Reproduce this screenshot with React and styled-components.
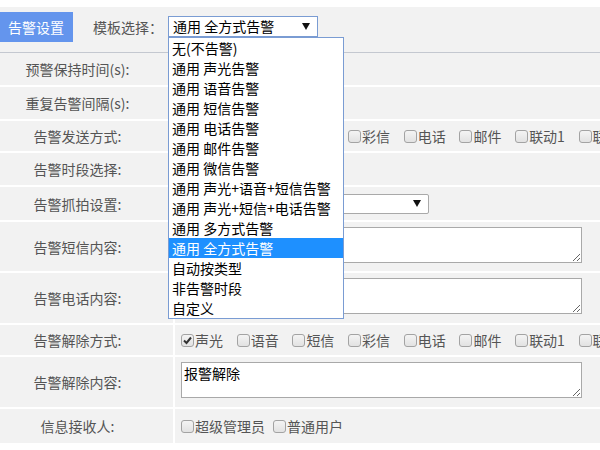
import styled, { createGlobalStyle } from "styled-components";

const GlobalStyle = createGlobalStyle`
  body {
    margin: 0;
    background: #fff;
    font-family: "Noto Sans CJK SC", "Liberation Sans", sans-serif;
    font-size: 14px;
    color: #555;
  }
`;

const Page = styled.div`
  width: 600px;
  padding-top: 7px;
  overflow: hidden;
`;

const Header = styled.div`
  display: flex;
  align-items: flex-start;
  height: 40px;
  padding-top: 5px;
  background: #f2f2f2;
  border-bottom: 1px solid #c4c8d0;
  position: relative;
  z-index: 2;
`;

const TabButton = styled.div`
  height: 30px;
  line-height: 30px;
  padding: 0 9px 0 8px;
  background: #6495ed;
  color: #fff;
  font-size: 14px;
`;

const HeaderLabel = styled.span`
  margin-left: 20px;
  line-height: 30px;
  color: #555;
`;

const SelectWrap = styled.div`
  position: relative;
  margin-left: 5px;
  margin-top: 4px;
`;

const SelectBox = styled.div`
  display: flex;
  align-items: center;
  justify-content: space-between;
  box-sizing: border-box;
  width: ${(p) => p.$width}px;
  height: ${(p) => p.$height || 21}px;
  padding: 0 7px 0 4px;
  background: #fff;
  border: 1px solid ${(p) => (p.$focus ? "#7a9cd3" : "#a9a9a9")};
  border-radius: ${(p) => (p.$focus ? 0 : 2)}px;
  color: #000;
  font-size: 14px;
  line-height: 19px;
`;

const Arrow = styled.span`
  width: 0;
  height: 0;
  border-left: 4px solid transparent;
  border-right: 4px solid transparent;
  border-top: 7px solid #111;
`;

const OptionList = styled.ul`
  position: absolute;
  top: 21px;
  left: 0;
  width: 176px;
  box-sizing: border-box;
  margin: 0;
  padding: 0;
  list-style: none;
  background: #fff;
  border: 1px solid #7a9cd3;
`;

const Option = styled.li`
  height: 20px;
  line-height: 20px;
  padding-left: 3px;
  color: ${(p) => (p.$active ? "#fff" : "#000")};
  background: ${(p) => (p.$active ? "#1e90ff" : "transparent")};
  white-space: nowrap;
`;

const Table = styled.div`
  display: flex;
  flex-direction: column;
`;

const Row = styled.div`
  display: grid;
  grid-template-columns: 173px 1fr;
  column-gap: 2px;
  height: ${(p) => p.$h}px;
  border-bottom: 2px solid #fff;
  background: #fff;
`;

const Label = styled.div`
  display: flex;
  align-items: center;
  justify-content: center;
  padding-right: 18px;
  background: #f2f2f2;
  color: #555;
  white-space: nowrap;
`;

const Value = styled.div`
  display: flex;
  align-items: ${(p) => (p.$top ? "flex-start" : "center")};
  padding: ${(p) => (p.$top ? "5px 0 0 6px" : "0 0 0 6px")};
  background: #f2f2f2;
  white-space: nowrap;
  overflow: hidden;
`;

const TextInput = styled.div`
  width: 140px;
  height: 20px;
  background: #fff;
  border: 1px solid #a9a9a9;
`;

const Check = styled.label`
  display: inline-flex;
  align-items: center;
  margin-right: ${(p) => p.$gap}px;
  color: #555;
  flex-shrink: 0;
`;

const Box = styled.span`
  display: inline-flex;
  align-items: center;
  justify-content: center;
  box-sizing: border-box;
  width: 13px;
  height: 13px;
  margin-right: 1px;
  border: 1px solid #a3a3a3;
  border-radius: 3px;
  background: linear-gradient(#f4f4f4, #e2e2e2);
`;

const Area = styled.textarea`
  box-sizing: border-box;
  width: 401px;
  height: 36px;
  margin: 0;
  padding: 1px 2px;
  border: 1px solid #a9a9a9;
  background: #fff;
  font-family: inherit;
  font-size: 14px;
  line-height: 18px;
  color: #000;
`;

const templates = [
  "无(不告警)",
  "通用 声光告警",
  "通用 语音告警",
  "通用 短信告警",
  "通用 电话告警",
  "通用 邮件告警",
  "通用 微信告警",
  "通用 声光+语音+短信告警",
  "通用 声光+短信+电话告警",
  "通用 多方式告警",
  "通用 全方式告警",
  "自动按类型",
  "非告警时段",
  "自定义",
];

const channels = ["声光", "语音", "短信", "彩信", "电话", "邮件", "联动1", "联动2"];

const Tick = () => (
  <svg width="11" height="11" viewBox="0 0 11 11">
    <path d="M2 5.5 L4.5 8 L9 2.5" fill="none" stroke="#333" strokeWidth="2" />
  </svg>
);

const CheckItem = ({ text, checked, gap = 13.7 }) => (
  <Check $gap={gap}>
    <Box>{checked && <Tick />}</Box>
    {text}
  </Check>
);

const ChannelChecks = ({ checked = [] }) =>
  channels.map((c) => <CheckItem key={c} text={c} checked={checked.includes(c)} />);

export default function App() {
  return (
    <Page>
      <GlobalStyle />
      <Header>
        <TabButton>告警设置</TabButton>
        <HeaderLabel>模板选择：</HeaderLabel>
        <SelectWrap>
          <SelectBox $width={150} $focus>
            <span>通用 全方式告警</span>
            <Arrow />
          </SelectBox>
          <OptionList>
            {templates.map((t) => (
              <Option key={t} $active={t === "通用 全方式告警"}>
                {t}
              </Option>
            ))}
          </OptionList>
        </SelectWrap>
      </Header>
      <Table>
        <Row $h={32}>
          <Label>预警保持时间(s):</Label>
          <Value>
            <TextInput />
          </Value>
        </Row>
        <Row $h={32}>
          <Label>重复告警间隔(s):</Label>
          <Value>
            <TextInput />
          </Value>
        </Row>
        <Row $h={30}>
          <Label>告警发送方式:</Label>
          <Value>
            <ChannelChecks />
          </Value>
        </Row>
        <Row $h={32}>
          <Label>告警时段选择:</Label>
          <Value>
            <SelectBox $width={140} $height={20}>
              <span />
              <Arrow />
            </SelectBox>
          </Value>
        </Row>
        <Row $h={33}>
          <Label>告警抓拍设置:</Label>
          <Value>
            <SelectBox $width={248} $height={20}>
              <span />
              <Arrow />
            </SelectBox>
          </Value>
        </Row>
        <Row $h={49}>
          <Label>告警短信内容:</Label>
          <Value $top>
            <Area defaultValue="" />
          </Value>
        </Row>
        <Row $h={50}>
          <Label>告警电话内容:</Label>
          <Value $top>
            <Area defaultValue="" />
          </Value>
        </Row>
        <Row $h={30}>
          <Label>告警解除方式:</Label>
          <Value>
            <ChannelChecks checked={["声光"]} />
          </Value>
        </Row>
        <Row $h={50}>
          <Label>告警解除内容:</Label>
          <Value $top>
            <Area defaultValue="报警解除" />
          </Value>
        </Row>
        <Row $h={34}>
          <Label>信息接收人:</Label>
          <Value>
            <CheckItem text="超级管理员" gap={8} />
            <CheckItem text="普通用户" />
          </Value>
        </Row>
      </Table>
    </Page>
  );
}
